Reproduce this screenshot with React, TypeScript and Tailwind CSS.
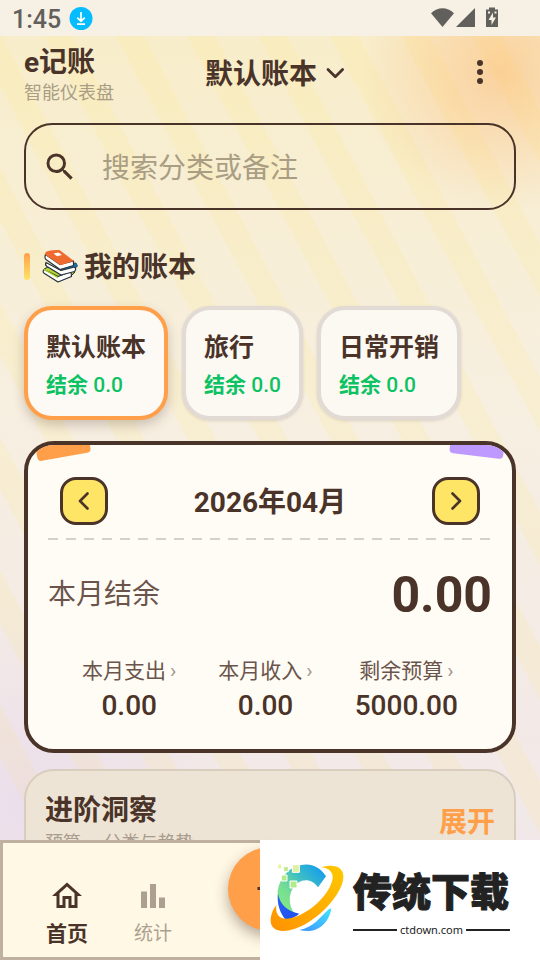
import React from 'react';

const ledgers = [
  { name: '默认账本', balance: '0.0', active: true },
  { name: '旅行', balance: '0.0', active: false },
  { name: '日常开销', balance: '0.0', active: false },
];

const stats = [
  { label: '本月支出', value: '0.00' },
  { label: '本月收入', value: '0.00' },
  { label: '剩余预算', value: '5000.00' },
];

function StatusBar() {
  return (
    <div className="flex h-9 shrink-0 items-center bg-[#f7f0e5] pl-3 pr-10 text-[#62605c]">
      <span className="pt-1 text-[25px] leading-8 font-medium">1:45</span>
      <svg className="ml-2 size-6" viewBox="0 0 24 24" aria-hidden="true">
        <circle cx="12" cy="12.5" r="11.5" fill="#05bcff" />
        <path d="M12 6v9M8.3 11.6L12 15.2l3.7-3.6M8 18.2h8" fill="none" stroke="#fff" strokeWidth="1.7" />
      </svg>
      <svg className="ml-auto h-6 w-[70px]" viewBox="0 0 70 24" fill="currentColor" aria-hidden="true">
        <path d="M1 7.2C8 .7 17 .7 24 7.2L12.5 21z" />
        <path d="M45 2v19H26z" />
        <path d="M56 3.500h3V1.500h6v2h3V21H56z" />
        <path d="M63 6.500l-4.500 7.500h3v5l4.500-7.500h-3z" fill="#f7f0e5" />
        <path d="M58 5.500h2v2h-2zM64.500 5.500h2v2h-2z" fill="#f7f0e5" />
      </svg>
    </div>
  );
}

function Header() {
  return (
    <header className="flex h-[74px] items-center justify-between">
      <div className="pt-1">
        <h1 className="text-[28px] leading-9 font-bold">e记账</h1>
        <p className="text-lg leading-6 text-[#a99d83]">智能仪表盘</p>
      </div>
      <button className="flex items-center text-[28px] leading-9 font-bold">
        <span className="pt-1">默认账本</span>
        <svg className="size-9" viewBox="0 0 36 36" fill="none" stroke="currentColor" strokeWidth="2.8" strokeLinecap="round" strokeLinejoin="round" aria-hidden="true">
          <path d="M11 14.500l7.300 7.300 7.300-7.300" />
        </svg>
      </button>
      <button aria-label="更多" className="flex w-[72px] justify-center">
        <svg className="size-9" viewBox="0 0 36 36" fill="currentColor" aria-hidden="true">
          <circle cx="18" cy="8" r="3" />
          <circle cx="18" cy="17" r="3" />
          <circle cx="18" cy="26" r="3" />
        </svg>
      </button>
    </header>
  );
}

function Books() {
  return (
    <svg className="size-9" viewBox="0 0 36 36" strokeLinejoin="round" aria-hidden="true">
      <path d="M2 21l4-2 27 5-4 4-13 5.500z" fill="#b7d433" stroke="#26323a" strokeWidth="1" />
      <path d="M2 21.500c-1.200 1.500-1.200 3 .5 4L16 34l13.500-5.500-.5-5L16 28.500z" fill="#fff" stroke="#26323a" strokeWidth="1.200" />
      <path d="M2 20.500l14 8.500v1.500L2 22z" fill="#b7d433" />
      <path d="M20 17l14-2 1.500 3-3 3-9 2z" fill="#1478b4" stroke="#26323a" strokeWidth="0.800" />
      <path d="M4 14.500L19 22.500l13.500-3.500c1.700 1.500 1.500 3 0 4.500L19 27 5 18.500c-1.500-1-1.700-2.700-1-4z" fill="#fff" stroke="#26323a" strokeWidth="1.200" />
      <path d="M3.500 6.500l14.500 10 13.500-3.500v4.500L18 21.500 4 11.500c-1-1-1.300-3-.5-5z" fill="#fff" stroke="#26323a" strokeWidth="1.200" />
      <path d="M3.500 7C2.500 5 4 3.500 5.500 3.200 10 2 13 2 17.500 2L32 13l-13.500 4.200z" fill="#ee6a2e" />
      <path d="M11.500 5.500l5-1 3.500 2.500-5 1.200z" fill="#fff" />
    </svg>
  );
}

function LedgerCard({ name, balance, active }: { name: string; balance: string; active: boolean }) {
  return (
    <button
      className={
        active
          ? 'rounded-[28px] border-4 border-[#ff9f4a] bg-[#fdf9f4] px-[18px] pt-5 pb-4 text-left shadow-[0_5px_12px_rgba(74,51,40,0.25)]'
          : 'rounded-[28px] border-4 border-[#e2dbd5] bg-[#fcf8f2] px-[18px] pt-5 pb-4 text-left shadow-[0_1px_3px_rgba(74,51,40,0.15)]'
      }
    >
      <span className="block text-[25px] leading-9 font-bold">{name}</span>
      <span className="block pt-1 text-[21px] leading-[30px] font-bold text-[#0cc263]">
        结余 <span className="font-medium">{balance}</span>
      </span>
    </button>
  );
}

function MonthButton({ label, d }: { label: string; d: string }) {
  return (
    <button aria-label={label} className="flex size-12 items-center justify-center rounded-2xl border-[3px] border-[#4a3328] bg-[#ffe566]">
      <svg className="size-9" viewBox="0 0 36 36" fill="none" stroke="currentColor" strokeWidth="2.6" strokeLinecap="round" strokeLinejoin="round" aria-hidden="true">
        <path d={d} />
      </svg>
    </button>
  );
}

function MonthCard() {
  return (
    <section className="relative mt-[21px] overflow-hidden rounded-[30px] border-4 border-[#4a3328] bg-[#fffcf5] px-5 pt-8 pb-[23px]">
      <span className="absolute -top-1.5 left-2 h-[18px] w-[54px] -rotate-10 rounded-sm bg-[#ff9f4a]" />
      <span className="absolute -top-[7px] right-2 h-[18px] w-[54px] rotate-7 rounded-sm bg-[#be99ff]" />
      <div className="flex items-center justify-between px-3">
        <MonthButton label="上个月" d="M21.500 10.500L14 18l7.500 7.500" />
        <h2 className="pt-1 text-[28px] leading-10 font-bold">2026年04月</h2>
        <MonthButton label="下个月" d="M14.500 10.500L22 18l-7.500 7.500" />
      </div>
      <div className="mt-[13px] h-0.5 bg-[repeating-linear-gradient(90deg,#d9cfc9_0_10px,transparent_10px_18px)]" />
      <div className="mt-[25px] flex h-[60px] items-center justify-between">
        <span className="text-[28px] text-[#6b544b]">本月结余</span>
        <span className="text-[50px] font-bold">0.00</span>
      </div>
      <div className="mt-[31px] flex justify-center gap-[42px]">
        {stats.map((s) => (
          <button key={s.label} className="flex flex-col items-center">
            <span className="flex gap-1 text-[21px] leading-[30px] text-[#6b544b]">
              {s.label}
              <span className="text-[#a3958d]">›</span>
            </span>
            <span className="text-[28px] leading-10 font-medium">{s.value}</span>
          </button>
        ))}
      </div>
    </section>
  );
}

function BottomNav() {
  return (
    <nav className="relative flex h-[120px] shrink-0 border-[3px] border-[#bfb09f] bg-[#fff8e4] px-[21px] pt-[35px]">
      <a href="#home" className="flex w-[86px] flex-col items-center gap-1.5 text-[21px] leading-7 font-bold">
        <svg className="size-9" viewBox="0 0 24 24" fill="currentColor" aria-hidden="true">
          <path d="M12 5.690l5 4.500V18h-2v-6H9v6H7v-7.810l5-4.500M12 3L2 12h3v8h6v-6h2v6h6v-8h3L12 3z" />
        </svg>
        首页
      </a>
      <a href="#stats" className="flex w-[86px] flex-col items-center gap-1.5 text-[19px] leading-7 text-[#ada090]">
        <svg className="size-9" viewBox="0 0 24 24" fill="currentColor" aria-hidden="true">
          <path d="M4 9h4v11H4zM10 4h4v16h-4zM16 13h4v7h-4z" />
        </svg>
        统计
      </a>
      <button
        aria-label="记一笔"
        className="absolute top-1 left-1/2 flex size-[84px] -translate-x-1/2 items-center justify-center rounded-full bg-[#ff9f4a] shadow-[0_6px_14px_rgba(74,51,40,0.4)]"
      >
        <svg className="size-9" viewBox="0 0 36 36" stroke="currentColor" strokeWidth="3" aria-hidden="true">
          <path d="M5.500 17.500h25M18 5v25" />
        </svg>
      </button>
    </nav>
  );
}

function SiteMark() {
  return (
    <svg className="h-[75px] w-[75px]" viewBox="0 0 225 225" aria-hidden="true">
      <defs>
        <linearGradient id="arc" x1="0" y1="1" x2="1" y2="0">
          <stop offset="0" stopColor="#8cf07a" />
          <stop offset="0.350" stopColor="#74dc94" />
          <stop offset="0.600" stopColor="#3fbfc4" />
          <stop offset="1" stopColor="#0a94f5" />
        </linearGradient>
        <linearGradient id="deep" x1="0" y1="0" x2="1" y2="1">
          <stop offset="0" stopColor="#2a62f0" />
          <stop offset="1" stopColor="#1f4df0" />
        </linearGradient>
        <linearGradient id="tail" x1="0" y1="1" x2="1" y2="0">
          <stop offset="0" stopColor="#3f93ff" />
          <stop offset="1" stopColor="#3fe3ff" />
        </linearGradient>
        <linearGradient id="ring" x1="0" y1="1" x2="1" y2="0">
          <stop offset="0" stopColor="#ff9200" />
          <stop offset="1" stopColor="#ffc800" />
        </linearGradient>
      </defs>
      <path d="M90 7c30-8 58 2 78 33l-24 33c-15-22-39-28-60-14-22 16-29 44-22 69 4 14 10 24 22 28-26 12-58-16-61-56C20 62 47 16 90 7z" fill="url(#arc)" />
      <path d="M24 92c6 32 26 52 64 60-12 10-25 16-40 20C30 150 20 122 24 92z" fill="url(#deep)" />
      <path d="M88 201c42-8 62-38 90-64h6c-8 46-46 78-96 64z" fill="url(#tail)" />
      <path d="M153 13C205-2 232 20 215 66c-20 52-82 112-142 132-50 16-83 0-67-48 3-9 7-16 13-24-5 40 22 50 62 34 50-20 96-68 106-108 5-22-8-37-34-39z" fill="url(#ring)" />
      <g stroke="#fff" strokeWidth="3">
        <path d="M67 5h21v23H67z" fill="#dff0a0" />
        <path d="M41 11h14v15H41z" fill="#bfe88a" />
        <path d="M34 36h17v18H34z" fill="#b3ea8c" />
        <path d="M60 54h21v21H60z" fill="#b3ea8c" />
      </g>
      <path d="M24 5h9v11h-9z" fill="#eaf3a0" />
    </svg>
  );
}

function SiteBadge() {
  return (
    <aside className="absolute right-0 bottom-0 flex h-[120px] w-[280px] items-center gap-2 bg-white pl-[10px] text-[#222]">
      <SiteMark />
      <div className="flex w-[157px] flex-col pt-1">
        <strong className="pt-0.5 text-[39px] leading-[54px] font-black whitespace-nowrap [-webkit-text-stroke:1px_#222]">传统下载</strong>
        <div className="flex items-center gap-[3px]">
          <span className="h-0.5 flex-1 bg-[#222]" />
          <span className="font-['Noto_Sans'] text-[11px] leading-5">ctdown.com</span>
          <span className="h-0.5 flex-1 bg-[#222]" />
        </div>
      </div>
    </aside>
  );
}

export default function App() {
  return (
    <div className="relative flex h-screen flex-col overflow-hidden bg-[radial-gradient(circle_at_500px_72px,rgba(255,159,74,0.36),transparent_140px),radial-gradient(circle_at_25px_800px,rgba(190,153,255,0.13),transparent_200px),repeating-linear-gradient(62deg,transparent_0_32px,rgba(255,230,109,0.13)_32px_57px,transparent_57px_63px),linear-gradient(180deg,#f8edc8_0%,#f7efe0_42%,#f2e9e8_80%,#f0e6ea_100%)] font-['Roboto','Noto_Sans_CJK_SC',sans-serif] text-[#4a3328]">
      <StatusBar />
      <main className="min-h-0 flex-1 overflow-hidden px-6">
        <Header />
        <label className="mt-[13px] flex h-[87px] items-center rounded-[28px] border-2 border-[#4a3328] pr-5 pl-4">
          <svg className="size-9 shrink-0" viewBox="0 0 24 24" fill="currentColor" aria-hidden="true">
            <path d="M15.500 14h-.790l-.280-.270A6.471 6.471 0 0 0 16 9.500 6.500 6.500 0 1 0 9.500 16c1.610 0 3.090-.590 4.230-1.570l.270.280v.790l5 4.990L20.490 19l-4.990-5zm-6 0C7.010 14 5 11.990 5 9.500S7.010 5 9.500 5 14 7.010 14 9.500 11.990 14 9.500 14z" />
          </svg>
          <input
            type="search"
            aria-label="搜索"
            placeholder="搜索分类或备注"
            className="ml-6 h-12 min-w-0 flex-1 bg-transparent pt-1 text-[28px] outline-none placeholder:text-[#a99d83]"
          />
        </label>
        <h2 className="mt-[38px] flex h-9 items-center text-[28px] leading-9 font-bold">
          <span className="mr-3 h-[27px] w-1.5 rounded-sm bg-linear-to-b from-[#ff9f4a] to-[#ffe566]" />
          <Books />
          <span className="ml-1.5 pt-1">我的账本</span>
        </h2>
        <div className="mt-[22px] flex gap-[14px]">
          {ledgers.map((l) => (
            <LedgerCard key={l.name} {...l} />
          ))}
        </div>
        <MonthCard />
        <section className="mt-4 flex items-center justify-between rounded-[30px] border-2 border-[#d9cdbe] bg-[#ede4d5] px-[19px] pt-5 pb-5">
          <div>
            <h2 className="text-[28px] leading-10 font-bold">进阶洞察</h2>
            <p className="text-lg leading-6 text-[#a99b8d]">预算、 分类与趋势</p>
          </div>
          <button className="text-[28px] leading-10 font-bold text-[#ff9f4a]">展开</button>
        </section>
      </main>
      <BottomNav />
      <SiteBadge />
    </div>
  );
}
